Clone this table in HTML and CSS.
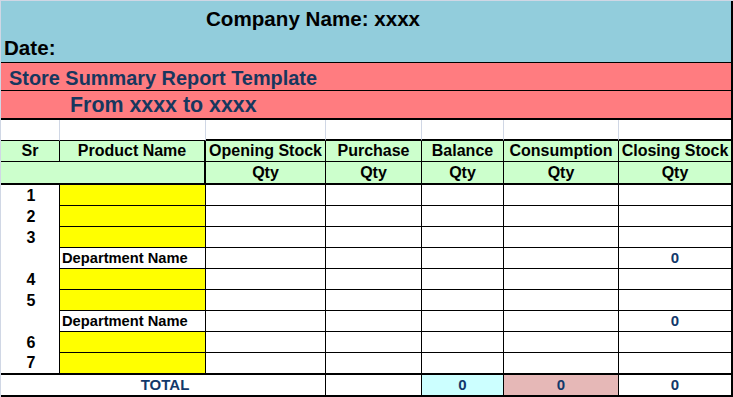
FILE: index.html
```html
<!DOCTYPE html>
<html>
<head>
<meta charset="utf-8">
<link rel="stylesheet" href="styles.css">
</head>
<body>
<div class="sheet">
  <div class="banner">
    <div class="company">Company Name: xxxx</div>
    <div class="date">Date:</div>
  </div>
  <div class="title">Store Summary Report Template</div>
  <div class="period">From xxxx to xxxx</div>
  <div class="grid">
    <div class="c blank"></div>
    <div class="c blank"></div>
    <div class="c blank tb"></div>
    <div class="c blank tb"></div>
    <div class="c blank tb"></div>
    <div class="c blank tb"></div>
    <div class="c blank tb last"></div>

    <div class="c hd">Sr</div>
    <div class="c hd br2">Product Name</div>
    <div class="c hd">Opening Stock</div>
    <div class="c hd">Purchase</div>
    <div class="c hd">Balance</div>
    <div class="c hd">Consumption</div>
    <div class="c hd last">Closing Stock</div>

    <div class="c hd span2 br2 bb2"></div>
    <div class="c hd bb2">Qty</div>
    <div class="c hd bb2">Qty</div>
    <div class="c hd bb2">Qty</div>
    <div class="c hd bb2">Qty</div>
    <div class="c hd bb2 last">Qty</div>

    <div class="c sr">1</div>
    <div class="c yellow"></div>
    <div class="c"></div><div class="c"></div><div class="c"></div><div class="c"></div><div class="c last"></div>

    <div class="c sr">2</div>
    <div class="c yellow"></div>
    <div class="c"></div><div class="c"></div><div class="c"></div><div class="c"></div><div class="c last"></div>

    <div class="c sr">3</div>
    <div class="c yellow"></div>
    <div class="c"></div><div class="c"></div><div class="c"></div><div class="c"></div><div class="c last"></div>

    <div class="c sr"></div>
    <div class="c dept">Department Name</div>
    <div class="c"></div><div class="c"></div><div class="c"></div><div class="c"></div><div class="c last num">0</div>

    <div class="c sr">4</div>
    <div class="c yellow"></div>
    <div class="c"></div><div class="c"></div><div class="c"></div><div class="c"></div><div class="c last"></div>

    <div class="c sr">5</div>
    <div class="c yellow"></div>
    <div class="c"></div><div class="c"></div><div class="c"></div><div class="c"></div><div class="c last"></div>

    <div class="c sr"></div>
    <div class="c dept">Department Name</div>
    <div class="c"></div><div class="c"></div><div class="c"></div><div class="c"></div><div class="c last num">0</div>

    <div class="c sr">6</div>
    <div class="c yellow"></div>
    <div class="c"></div><div class="c"></div><div class="c"></div><div class="c"></div><div class="c last"></div>

    <div class="c sr sr-last">7</div>
    <div class="c yellow bb2"></div>
    <div class="c bb2"></div><div class="c bb2"></div><div class="c bb2"></div><div class="c bb2"></div><div class="c bb2 last"></div>

    <div class="c span3 bb2 num total">TOTAL</div>
    <div class="c bb2"></div>
    <div class="c bb2 cyan num">0</div>
    <div class="c bb2 rose num">0</div>
    <div class="c bb2 last num">0</div>
  </div>
</div>
</body>
</html>
```

FILE: styles.css
```css
html, body {
  margin: 0;
  padding: 0;
  background: #ffffff;
}

body {
  font-family: "Liberation Sans", Arial, sans-serif;
  font-weight: bold;
  color: #000;
}

.sheet {
  width: 733px;
  box-sizing: border-box;
  border-top: 1px solid #d0d7e5;
  border-left: 1px solid #d0d7e5;
}

.banner {
  background: #92cddc;
  height: 62px;
  box-sizing: border-box;
  border-right: 2px solid #000;
  border-bottom: 1px solid #000;
}

.company {
  height: 31px;
  box-sizing: border-box;
  padding: 6px 0 0 205px;
  font-size: 20.6px;
  line-height: 24px;
}

.date {
  height: 30px;
  box-sizing: border-box;
  padding: 4px 0 0 3px;
  font-size: 20.6px;
  line-height: 24px;
}

.title,
.period {
  background: #ff7c80;
  color: #17375e;
  box-sizing: border-box;
  border-right: 2px solid #000;
}

.title {
  height: 28px;
  border-bottom: 1px solid #000;
  padding: 5px 0 0 8px;
  font-size: 19.9px;
  line-height: 20px;
}

.period {
  height: 29px;
  border-bottom: 2px solid #000;
  padding: 4px 0 0 69px;
  font-size: 21.4px;
  line-height: 21px;
}

.grid {
  display: grid;
  grid-template-columns: 59px 146px 120px 96px 82px 115px 114px;
  grid-template-rows: 21px 21px 23px repeat(8, 21px) 22px 22px;
}

.c {
  box-sizing: border-box;
  display: flex;
  align-items: center;
  justify-content: center;
  border-right: 1px solid #000;
  border-bottom: 1px solid #000;
  font-size: 16px;
  line-height: 16px;
  white-space: nowrap;
}

.blank {
  border-right-color: #d0d7e5;
}

.blank.tb {
  border-bottom-width: 2px;
}

.last {
  border-right: 2px solid #000;
}

.hd {
  background: #ccffcc;
}

.br2 {
  border-right-width: 2px;
}

.bb2 {
  border-bottom-width: 2px;
}

.span2 {
  grid-column: span 2;
}

.span3 {
  grid-column: span 3;
}

.sr {
  border-bottom: none;
  padding-left: 2px;
}

.sr-last {
  border-bottom: 2px solid #000;
}

.yellow {
  background: #ffff00;
}

.dept {
  justify-content: flex-start;
  padding-left: 2px;
  font-size: 14.7px;
}

.num {
  color: #12386a;
  font-size: 15px;
}

.total {
  padding-left: 4px;
}

.cyan {
  background: #ccffff;
}

.rose {
  background: #e6b8b7;
}
```
